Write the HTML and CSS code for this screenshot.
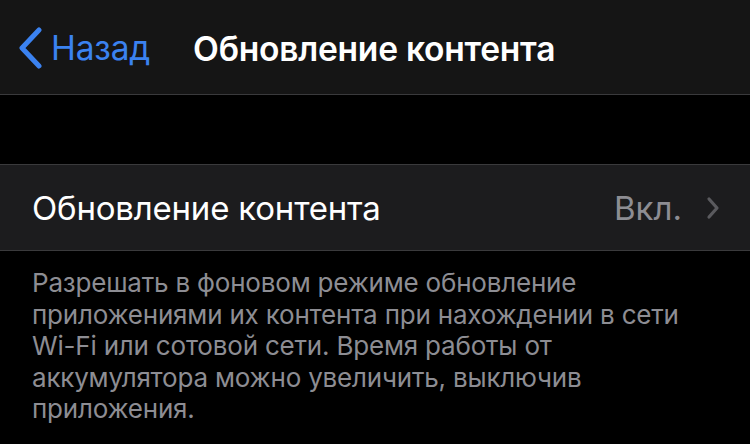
FILE: index.html
```html
<!DOCTYPE html>
<html lang="ru">
<head>
<meta charset="utf-8">
<link rel="stylesheet" href="styles.css">
</head>
<body>
<div class="nav">
  <div class="back">
    <svg class="back-chev" width="26" height="42" viewBox="0 0 26 42"><path d="M22 3 L5 21 L22 39" fill="none" stroke="#3b82f0" stroke-width="5" stroke-linecap="round" stroke-linejoin="round"/></svg>
    <span class="back-text">Назад</span>
  </div>
  <div class="title">Обновление контента</div>
</div>
<div class="gap"></div>
<div class="row">
  <span class="row-label">Обновление контента</span>
  <span class="row-value">Вкл.</span>
  <svg class="row-chev" width="14" height="24" viewBox="0 0 14 24"><path d="M3 3 L11 12 L3 21" fill="none" stroke="#5a5a5e" stroke-width="3.2" stroke-linecap="round" stroke-linejoin="round"/></svg>
</div>
<div class="footer">Разрешать в фоновом режиме обновление<br>приложениями их контента при нахождении в сети<br>Wi-Fi или сотовой сети. Время работы от<br>аккумулятора можно увеличить, выключив<br>приложения.</div>
</body>
</html>
```
FILE: styles.css
```css
html, body {
  margin: 0;
  padding: 0;
  background: #000;
  width: 750px;
  height: 444px;
  overflow: hidden;
  font-family: Inter, "Noto Sans", sans-serif;
}
.nav {
  height: 94px;
  background: #151515;
  border-bottom: 1px solid #3a3a3c;
  display: flex;
  align-items: center;
  position: relative;
}
.back {
  display: flex;
  align-items: center;
  padding-left: 17px;
  gap: 8px;
  margin-top: 2px;
}
.back-text {
  color: #3b82f0;
  font-size: 33.5px;
  letter-spacing: -0.2px;
}
.title {
  margin-left: 43px;
  margin-top: 2px;
  color: #fff;
  font-size: 33.6px;
  font-weight: 600;
  letter-spacing: -0.25px;
}
.gap {
  height: 69px;
}
.row {
  height: 85px;
  background: #1c1c1e;
  border-top: 1px solid #3a3a3c;
  border-bottom: 1px solid #3a3a3c;
  display: flex;
  align-items: center;
  padding: 0 30px 0 32px;
}
.row-label {
  color: #fff;
  font-size: 33px;
  flex: 1;
  letter-spacing: -0.2px;
}
.row-value {
  color: #8d8d93;
  font-size: 33px;
  margin-right: 24px;
}
.footer {
  padding: 16px 32px 0;
  color: #8d8d93;
  font-size: 26px;
  line-height: 31.5px;
  letter-spacing: -0.2px;
}
```
